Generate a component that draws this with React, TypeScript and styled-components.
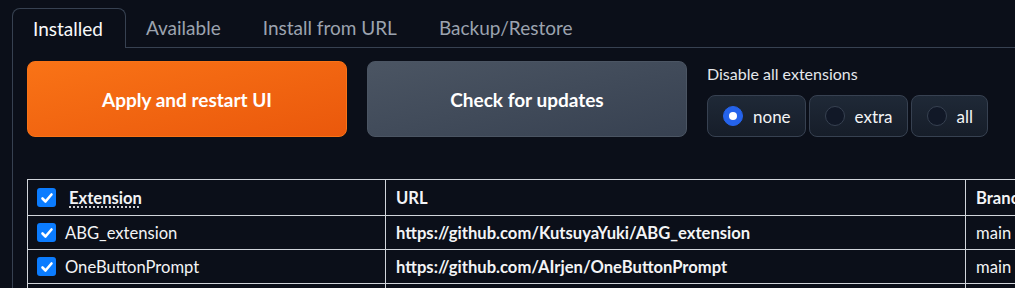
import * as React from 'react';
import styled, {createGlobalStyle} from 'styled-components';

const GlobalStyle = createGlobalStyle`
	html, body {
		margin: 0;
		padding: 0;
		background: #0b0f19;
		color: #f3f4f6;
		font-family: "Lato", "Liberation Sans", sans-serif;
	}
`;

const Page = styled.div`
	width: 1015px;
	height: 288px;
	overflow: hidden;
	padding: 8px 0 0 12px;
	box-sizing: border-box;
`;

const TabNav = styled.div`
	display: flex;
	height: 40px;
	box-sizing: border-box;
`;

const TabButton = styled.div<{$active?: boolean}>`
	display: flex;
	align-items: center;
	padding: 0 22px 0 20px;
	font-size: 19px;
	color: ${p => (p.$active ? '#f9fafb' : '#9ca3af')};
	box-sizing: border-box;
	${p =>
		p.$active
			? 'border: 1px solid #374151; border-bottom: none; border-radius: 8px 8px 0 0;'
			: 'border-bottom: 1px solid #374151;'}
`;

const TabFill = styled.div`
	flex: 1;
	border-bottom: 1px solid #374151;
`;

const Panel = styled.div`
	border-left: 1px solid #374151;
	padding: 13px 0 0 14px;
	height: 300px;
`;

const ControlRow = styled.div`
	display: flex;
	gap: 20px;
	align-items: flex-start;
`;

const BigButton = styled.div<{$variant: 'primary' | 'secondary'}>`
	width: 320px;
	height: 76px;
	display: flex;
	align-items: center;
	justify-content: center;
	border-radius: 8px;
	box-sizing: border-box;
	font-size: 19px;
	font-weight: 700;
	color: #ffffff;
	background: ${p =>
		p.$variant === 'primary'
			? 'linear-gradient(to bottom right, #f97316, #ea580c)'
			: 'linear-gradient(to bottom right, #4b5563, #374151)'};
	border: 1px solid ${p => (p.$variant === 'primary' ? '#f97316' : '#4b5563')};
`;

const RadioBlock = styled.div`
	display: flex;
	flex-direction: column;
`;

const RadioLabel = styled.div`
	font-size: 16px;
	color: #e5e7eb;
	height: 24px;
	display: flex;
	align-items: center;
	margin-bottom: 10px;
`;

const RadioOptions = styled.div`
	display: flex;
	gap: 3px;
`;

const RadioItem = styled.div`
	display: flex;
	align-items: center;
	gap: 10px;
	height: 42px;
	padding: 0 14px 0 15px;
	box-sizing: border-box;
	border: 1px solid #374151;
	border-radius: 8px;
	background: linear-gradient(to bottom, #1f2937, #161d29);
	font-size: 17px;
	color: #f3f4f6;
`;

const RadioDot = styled.span<{$checked?: boolean}>`
	width: 20px;
	height: 20px;
	border-radius: 50%;
	box-sizing: border-box;
	display: flex;
	align-items: center;
	justify-content: center;
	background: ${p => (p.$checked ? '#2563eb' : '#111827')};
	border: 1px solid ${p => (p.$checked ? '#2563eb' : '#374151')};
	&::after {
		content: '';
		display: ${p => (p.$checked ? 'block' : 'none')};
		width: 8px;
		height: 8px;
		border-radius: 50%;
		background: #ffffff;
	}
`;

const Table = styled.table`
	margin-top: 42px;
	border-collapse: collapse;
	font-size: 16.6px;
	color: #f3f4f6;
`;

const Cell = styled.td<{$w?: number; $bold?: boolean}>`
	border: 1px solid #d1d5db;
	padding: 0 10px;
	height: 34px;
	white-space: nowrap;
	font-weight: ${p => (p.$bold ? 700 : 400)};
	${p => p.$w && `width: ${p.$w}px; min-width: ${p.$w}px;`}
	box-sizing: border-box;
`;

const HeadCell = styled(Cell).attrs({as: 'th'})`
	height: 36px;
	text-align: left;
	font-weight: 700;
`;

const CellInner = styled.div`
	display: flex;
	align-items: center;
	gap: 9px;
`;

const Abbr = styled.abbr`
	text-decoration: underline dotted;
	text-underline-offset: 3px;
	margin-left: 4px;
`;

const CheckBox = styled.span`
	width: 19px;
	height: 19px;
	border-radius: 3px;
	background: #0b7cff;
	display: inline-flex;
	align-items: center;
	justify-content: center;
	flex-shrink: 0;
	margin-left: -1px;
`;

const Check = () => (
	<CheckBox>
		<svg width="14" height="14" viewBox="0 0 14 14">
			<path d="M2.5 7.5 L5.5 10.5 L11.5 3.5" fill="none" stroke="#fff" strokeWidth="2.6" strokeLinecap="round" strokeLinejoin="round" />
		</svg>
	</CheckBox>
);

const rows = [
	{name: 'ABG_extension', url: 'https://github.com/KutsuyaYuki/ABG_extension', branch: 'main'},
	{name: 'OneButtonPrompt', url: 'https://github.com/AIrjen/OneButtonPrompt', branch: 'main'},
	{name: 'a1111-sd-webui-tagcomplete', url: 'https://github.com/DominikDoom/a1111-sd-webui-tagcomplete', branch: 'main'},
];

export default function App() {
	const tabs = ['Installed', 'Available', 'Install from URL', 'Backup/Restore'];
	const [mode, setMode] = React.useState('none');

	return (
		<>
			<GlobalStyle />
			<Page>
				<TabNav>
					{tabs.map((t, i) => (
						<TabButton key={t} $active={i === 0}>{t}</TabButton>
					))}
					<TabFill />
				</TabNav>
				<Panel>
					<ControlRow>
						<BigButton $variant="primary">Apply and restart UI</BigButton>
						<BigButton $variant="secondary">Check for updates</BigButton>
						<RadioBlock>
							<RadioLabel>Disable all extensions</RadioLabel>
							<RadioOptions>
								{['none', 'extra', 'all'].map(m => (
									<RadioItem key={m} onClick={() => setMode(m)}>
										<RadioDot $checked={mode === m} />
										{m}
									</RadioItem>
								))}
							</RadioOptions>
						</RadioBlock>
					</ControlRow>
					<Table>
						<thead>
							<tr>
								<HeadCell $w={358}>
									<CellInner>
										<Check />
										<Abbr title="Use checkbox to enable the extension">Extension</Abbr>
									</CellInner>
								</HeadCell>
								<HeadCell $w={580}>URL</HeadCell>
								<HeadCell $w={120}>Branch</HeadCell>
							</tr>
						</thead>
						<tbody>
							{rows.map(r => (
								<tr key={r.name}>
									<Cell>
										<CellInner>
											<Check />
											{r.name}
										</CellInner>
									</Cell>
									<Cell $bold>{r.url}</Cell>
									<Cell>{r.branch}</Cell>
								</tr>
							))}
						</tbody>
					</Table>
				</Panel>
			</Page>
		</>
	);
}
